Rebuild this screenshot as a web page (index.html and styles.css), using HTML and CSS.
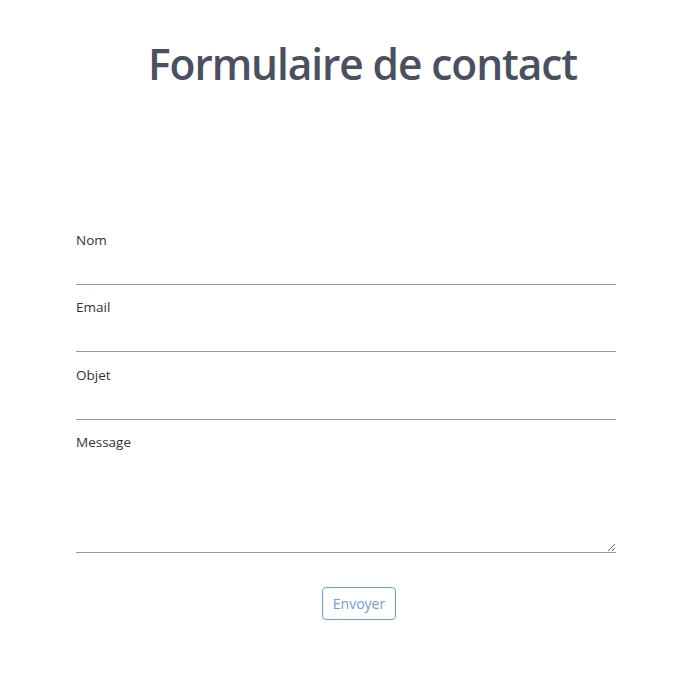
FILE: index.html
```html
<!DOCTYPE html>
<html lang="fr">
<head>
<meta charset="utf-8">
<title>Formulaire de contact</title>
<link rel="stylesheet" href="styles.css">
</head>
<body>
<main class="page">
  <h1 class="title">Formulaire de contact</h1>
  <form class="form">
    <div class="field">
      <label class="label" for="nom">Nom</label>
      <input class="input" id="nom" type="text">
    </div>
    <div class="field">
      <label class="label" for="email">Email</label>
      <input class="input" id="email" type="email">
    </div>
    <div class="field">
      <label class="label" for="objet">Objet</label>
      <input class="input" id="objet" type="text">
    </div>
    <div class="field">
      <label class="label" for="message">Message</label>
      <textarea class="input textarea" id="message"></textarea>
    </div>
    <div class="actions">
      <button class="btn" type="button">Envoyer</button>
    </div>
  </form>
</main>
</body>
</html>
```
FILE: styles.css
```css
html, body {
  margin: 0;
  padding: 0;
  background: #ffffff;
}
body {
  font-family: "Open Sans", "Noto Sans", sans-serif;
  color: #222;
}
.page {
  width: 540px;
  padding: 34px 0 0 76px;
}
.title {
  margin: 0;
  padding-left: 72px;
  white-space: nowrap;
  font-size: 42.5px;
  font-weight: 600;
  line-height: 60px;
  color: #4a5060;
  letter-spacing: -1.1px;
}
.form {
  margin-top: 137px;
  display: flex;
  flex-direction: column;
}
.field {
  display: flex;
  flex-direction: column;
  margin-bottom: 13.3px;
}
.label {
  font-size: 13.5px;
  line-height: 18px;
  color: #333;
}
.input {
  display: block;
  width: 540px;
  box-sizing: border-box;
  height: 36px;
  margin: 0;
  padding: 0;
  border: none;
  border-bottom: 1px solid #999;
  outline: none;
  background: transparent;
  font-family: inherit;
  font-size: 14px;
}
.textarea {
  height: 102px;
  resize: vertical;
}
.actions {
  display: flex;
  justify-content: center;
  padding-left: 26px;
  margin-top: 21px;
}
.btn {
  height: 33px;
  padding: 0 10px;
  border: 1px solid #6c9de0;
  border-radius: 4px;
  background: #fff;
  color: #6c9de0;
  font-family: inherit;
  font-size: 14px;
}
```
